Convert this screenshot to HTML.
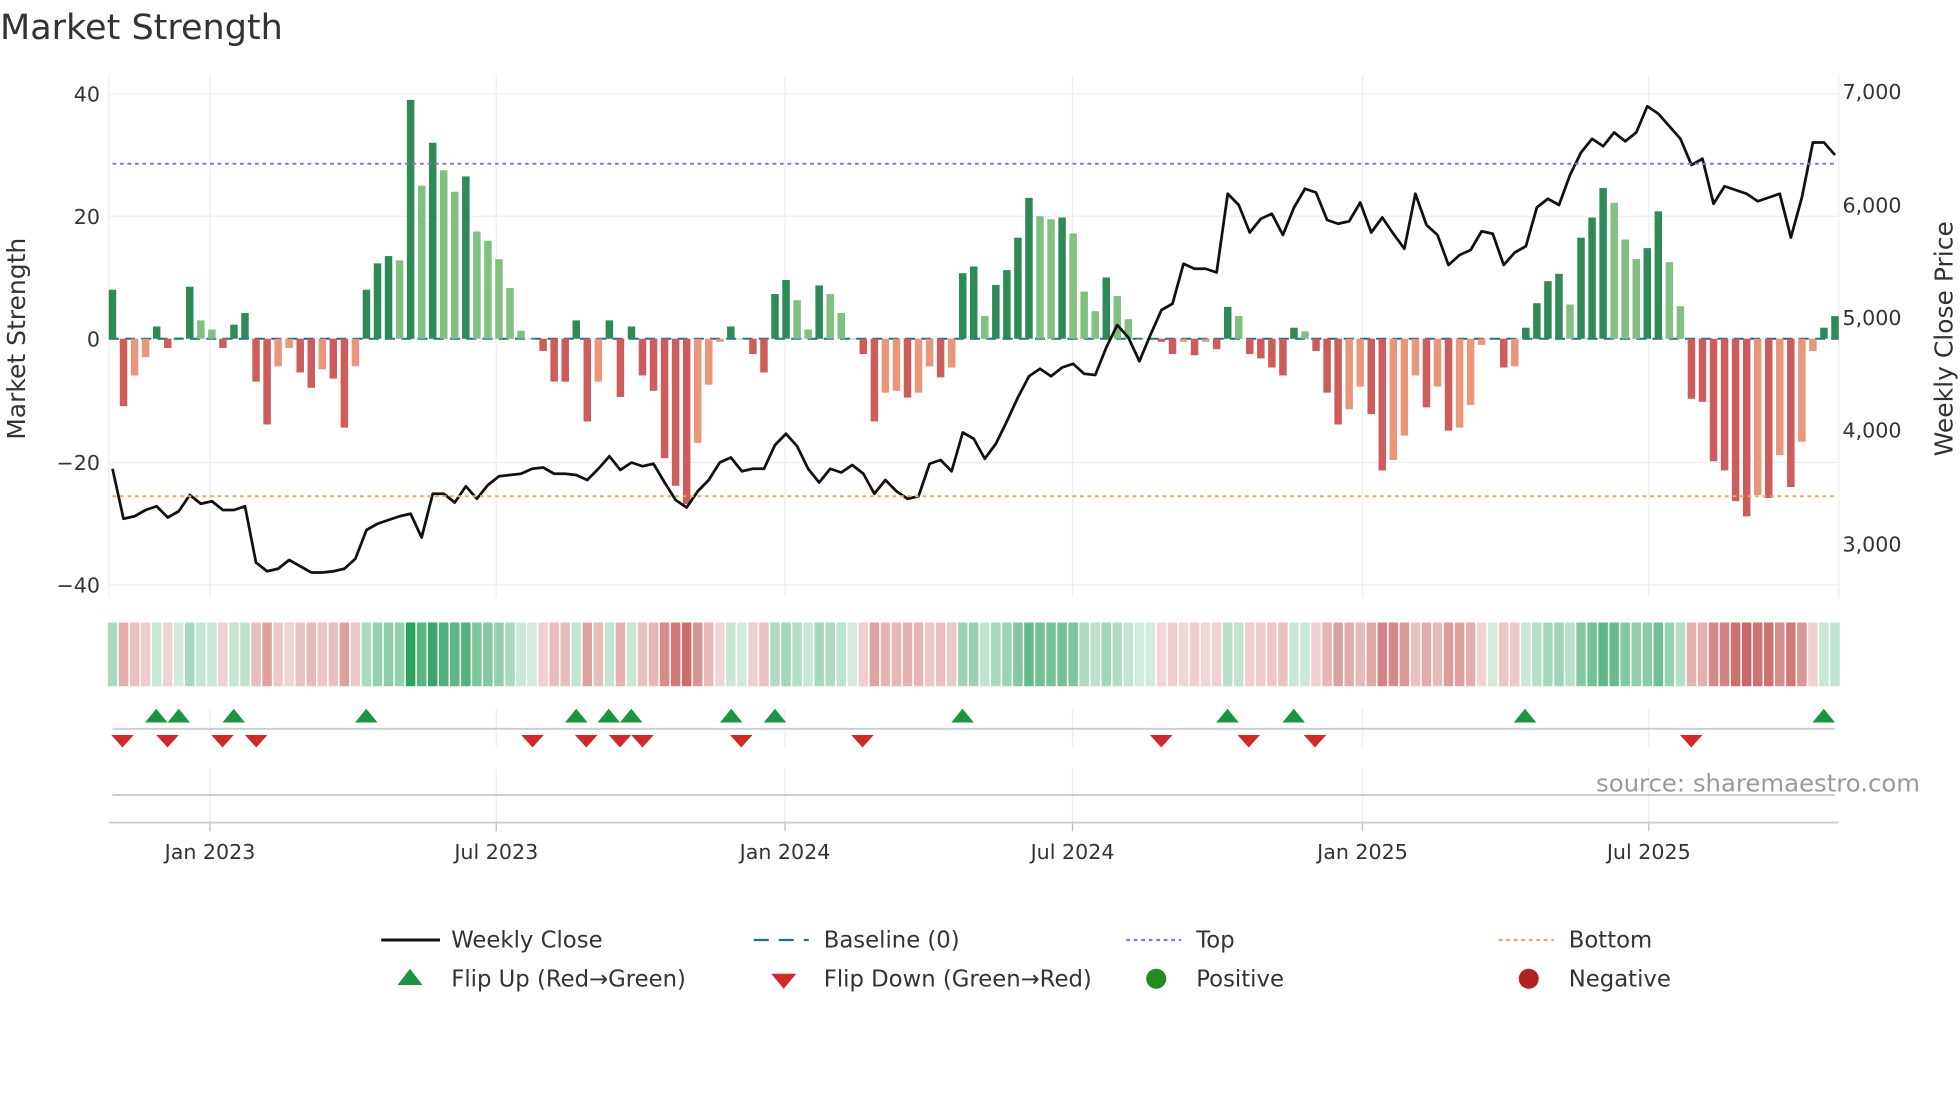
<!DOCTYPE html>
<html><head><meta charset="utf-8"><style>
html,body{margin:0;padding:0;background:#fff;width:1960px;height:1102px;overflow:hidden}
svg{display:block}
text{font-family:"DejaVu Sans","Liberation Sans",sans-serif;fill:#333}
</style></head><body>
<svg id="s" width="1960" height="1102" viewBox="0 0 1568 881.6" xmlns="http://www.w3.org/2000/svg">
<text x="0" y="31" font-size="28">Market Strength</text>
<g id="grid"></g>
<g id="bars"></g>
<g id="heat"></g>
<g id="mk"></g>
<polyline id="price" fill="none" stroke="#111" stroke-width="2.2" stroke-linejoin="round"/>
<line x1="90" y1="131" x2="1468" y2="131" stroke="#9370db" stroke-width="1.6" stroke-dasharray="3,3"/>
<line x1="90" y1="397" x2="1468" y2="397" stroke="#f4a460" stroke-width="1.6" stroke-dasharray="3,3"/>
<g font-size="16.5" text-anchor="end">
<text x="80" y="81">40</text><text x="80" y="179">20</text><text x="80" y="277">0</text>
<text x="80" y="376">−20</text><text x="80" y="474">−40</text></g>
<g font-size="16.5">
<text x="1474" y="79">7,000</text><text x="1474" y="170">6,000</text><text x="1474" y="260">5,000</text>
<text x="1474" y="350">4,000</text><text x="1474" y="441">3,000</text></g>
<text transform="translate(20,271) rotate(-90)" font-size="20" text-anchor="middle">Market Strength</text>
<text transform="translate(1562,271) rotate(-90)" font-size="20" text-anchor="middle">Weekly Close Price</text>
<g font-size="16.5" text-anchor="middle">
<text x="168" y="687">Jan 2023</text><text x="397" y="687">Jul 2023</text><text x="628" y="687">Jan 2024</text>
<text x="858" y="687">Jul 2024</text><text x="1090" y="687">Jan 2025</text><text x="1319" y="687">Jul 2025</text></g>
<text x="1536" y="633" font-size="19.5" text-anchor="end" style="fill:#999">source: sharemaestro.com</text>
<g font-size="18.2">
<line x1="305" y1="752" x2="352" y2="752" stroke="#111" stroke-width="2.4"/><text x="361" y="758">Weekly Close</text>
<line x1="603" y1="752" x2="647" y2="752" stroke="#1f6f8b" stroke-width="1.8" stroke-dasharray="12,8"/><text x="659" y="758">Baseline (0)</text>
<line x1="901" y1="752" x2="945" y2="752" stroke="#9370db" stroke-width="1.8" stroke-dasharray="3,3"/><text x="957" y="758">Top</text>
<line x1="1199" y1="752" x2="1243" y2="752" stroke="#f4a460" stroke-width="1.8" stroke-dasharray="3,3"/><text x="1255" y="758">Bottom</text>
<polygon points="318,788 338,788 328,775" fill="#1a9641"/><text x="361" y="789">Flip Up (Red→Green)</text>
<polygon points="617,779 637,779 627,791" fill="#d62728"/><text x="659" y="789">Flip Down (Green→Red)</text>
<circle cx="925" cy="783" r="8" fill="#228b22"/><text x="957" y="789">Positive</text>
<circle cx="1223" cy="783" r="8" fill="#b22222"/><text x="1255" y="789">Negative</text>
</g>
</svg>
<script>
var NS="http://www.w3.org/2000/svg";
function el(p,t,a){var e=document.createElementNS(NS,t);for(var k in a)e.setAttribute(k,a[k]);p.appendChild(e);return e;}
var v=[8,-11,-6,-3,2,-1.5,0.2,8.5,3,1.5,-1.5,2.3,4.2,-7,-14,-4.5,-1.5,-5.5,-8,-5,-6.5,-14.5,-4.5,8,12.3,13.5,12.8,39,25,32,27.5,24,26.5,17.5,16,13,8.3,1.3,0,-2,-7,-7,3,-13.5,-7,3,-9.5,2,-6,-8.5,-19.5,-24,-27,-17,-7.5,-0.5,2,0,-2.5,-5.5,7.3,9.6,6.3,1.5,8.7,7.3,4.2,0,-2.5,-13.5,-8.8,-8.5,-9.6,-8.8,-4.5,-6.3,-4.7,10.7,11.8,3.7,8.8,11.2,16.5,23,20,19.5,19.8,17.2,7.7,4.5,10,7,3.2,0,0,-0.5,-2.5,-0.5,-2.7,-0.5,-1.7,5.2,3.7,-2.5,-3.2,-4.7,-6,1.8,1.2,-2,-8.8,-14,-11.5,-7.8,-12.3,-21.5,-19.8,-15.8,-6,-11.2,-7.8,-15,-14.5,-10.8,-1,0,-4.7,-4.5,1.8,5.8,9.4,10.6,5.6,16.5,19.8,24.6,22.2,16.2,13,14.8,20.8,12.5,5.3,-9.8,-10.3,-20,-21.5,-26.5,-29,-25.5,-26,-19,-24.2,-16.8,-2,1.8,3.7];
var n=v.length,x0=90,x1=1468,dx=(x1-x0)/(n-1);
var g=document.getElementById("grid");
[75,173,271,370,468].forEach(function(y){el(g,"line",{x1:87,x2:1471,y1:y,y2:y,stroke:"#eee","stroke-width":1});});
[168,397,628,858,1090,1319].forEach(function(x){el(g,"line",{x1:x,x2:x,y1:60,y2:478,stroke:"#eee","stroke-width":1});
el(g,"line",{x1:x,x2:x,y1:567,y2:598,stroke:"#eee","stroke-width":1});el(g,"line",{x1:x,x2:x,y1:615,y2:658,stroke:"#eee","stroke-width":1});
el(g,"line",{x1:x,x2:x,y1:658,y2:665,stroke:"#bbb","stroke-width":1});});
el(g,"line",{x1:87,x2:87,y1:60,y2:478,stroke:"#eee"});el(g,"line",{x1:1471,x2:1471,y1:60,y2:478,stroke:"#eee"});
el(g,"line",{x1:90,x2:1468,y1:583,y2:583,stroke:"#ccc","stroke-width":1.5});
el(g,"line",{x1:90,x2:1468,y1:636,y2:636,stroke:"#ccc","stroke-width":1.5});
el(g,"line",{x1:87,x2:1471,y1:658,y2:658,stroke:"#ccc","stroke-width":1.5});
var b=document.getElementById("bars"),h=document.getElementById("heat");
el(b,"line",{x1:87,x2:1471,y1:271,y2:271,stroke:"#1f6f8b","stroke-width":1.6,"stroke-dasharray":"8,5"});
for(var i=0;i<n;i++){var x=x0+i*dx,val=v[i],p=i?v[i-1]:0,c;
if(val>=0)c=(val>=p)?"#2e8b57":"#80c080";else c=(val<=p)?"#cd5c5c":"#e9967a";
var y=271-val*4.9;el(b,"rect",{x:x-3,y:Math.min(y,271),width:6,height:Math.max(Math.abs(val*4.9),0.5),fill:c});
var a=Math.min(1,0.22+Math.abs(val)/40*0.9);
el(h,"rect",{x:x-3.8,y:498,width:7.6,height:51,fill:val>=0?"#2ca25f":"#c0504d","fill-opacity":a});}
var m=document.getElementById("mk");
[125,143,187,293,461,487,505,585,620,770,982,1035,1220,1459].forEach(function(x){el(m,"polygon",{points:(x-9)+",578 "+(x+9)+",578 "+x+",567",fill:"#1a9641"});});
[98,134,178,205,426,469,496,514,593,690,929,999,1052,1353].forEach(function(x){el(m,"polygon",{points:(x-9)+",588 "+(x+9)+",588 "+x+",598",fill:"#d62728"});});
var py=[375,415,413,408,405,414,409,396,403,401,408,408,405,450,457,455,448,453,458,458,457,455,447,424,419,416,413,411,430,395,395,402,389,399,388,381,380,379,375,374,379,379,380,384,375,365,376,370,373,371,386,400,406,393,384,370,366,377,375,375,356,347,357,375,386,375,378,372,379,395,384,393,399,397,371,368,377,346,351,367,355,337,318,301,295,301,294,291,299,300,278,260,270,289,268,248,243,211,215,215,218,155,164,186,175,171,188,166,151,154,176,179,177,162,186,174,187,199,155,180,188,212,204,200,185,187,212,202,197,166,159,164,140,122,111,117,106,113,106,85,91,101,111,132,127,163,149,152,155,161,158,155,190,158,114,114,124];
var pts=[];for(var i=0;i<py.length;i++)pts.push((x0+i*(x1-x0)/(py.length-1)).toFixed(1)+","+py[i]);
document.getElementById("price").setAttribute("points",pts.join(" "));
</script>
</body></html>
